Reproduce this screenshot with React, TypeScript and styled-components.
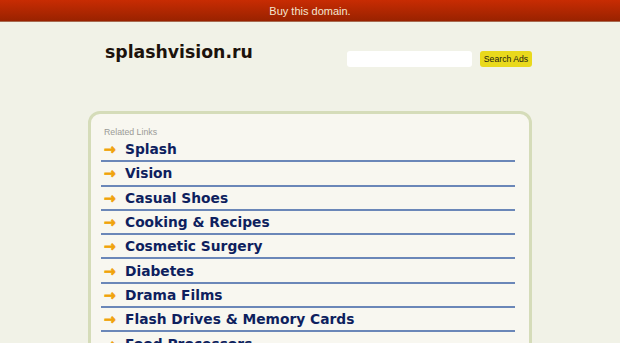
import styled, { createGlobalStyle } from "styled-components"

const GlobalStyle = createGlobalStyle`
    html, body {
        margin: 0;
        padding: 0;
        background-color: #f1f2e7;
        overflow: hidden;
    }
`

const TopBar = styled.div`
    height: 21px;
    background: linear-gradient(#c82c03, #992200);
    border-bottom: 1px solid #a86a50;
    display: flex;
    align-items: center;
    justify-content: center;
    font-family: "Liberation Sans", Arial, sans-serif;
    font-size: 11px;
    color: #f4e6d0;
`

const Page = styled.div`
    width: 444px;
    margin: 0 auto;
`

const Header = styled.div`
    padding: 18px 0 0 17px;
    height: 71px;
    display: flex;
    align-items: flex-start;
    justify-content: space-between;
`

const Title = styled.h1`
    margin: 0;
    font-family: "DejaVu Sans", Verdana, sans-serif;
    font-weight: bold;
    font-size: 17.3px;
    line-height: 24px;
    color: #1c120c;
`

const SearchForm = styled.form`
    display: flex;
    gap: 8px;
    padding-top: 11px;
`

const SearchInput = styled.input`
    width: 125px;
    height: 16px;
    box-sizing: border-box;
    border: none;
    border-radius: 3px;
    background: #ffffff;
`

const SearchButton = styled.button`
    height: 16px;
    width: 52px;
    padding: 0;
    border: none;
    border-radius: 3px;
    background: #e9d91c;
    font-family: "Liberation Sans", Arial, sans-serif;
    font-size: 8.7px;
    color: #222010;
`

const Panel = styled.div`
    border: 3px solid #d5dcb9;
    border-radius: 12px;
    background: #f8f7f0;
    padding: 13px 14px 0 10px;
    height: 300px;
    box-sizing: border-box;
`

const Caption = styled.div`
    font-family: "Liberation Sans", Arial, sans-serif;
    font-size: 8.75px;
    color: #9a9a96;
    padding-left: 3px;
    margin-bottom: 1px;
`

const LinkList = styled.ul`
    list-style: none;
    margin: 0;
    padding: 0;
`

const LinkRow = styled.li`
    height: 22.3px;
    border-bottom: 2px solid #6b87b8;
    display: flex;
    align-items: center;
    gap: 9px;
    padding-left: 3px;
`

const Arrow = styled.span`
    color: #f0a30a;
    font-family: "DejaVu Sans", sans-serif;
    font-weight: bold;
    font-size: 14px;
    width: 12px;
    line-height: 1;
    -webkit-text-stroke: 0.7px #f0a30a;
`

const LinkText = styled.a`
    font-family: "DejaVu Sans", Verdana, sans-serif;
    font-weight: bold;
    font-size: 13.8px;
    color: #0e1f5e;
    text-decoration: none;
`

const links = [
    "Splash",
    "Vision",
    "Casual Shoes",
    "Cooking & Recipes",
    "Cosmetic Surgery",
    "Diabetes",
    "Drama Films",
    "Flash Drives & Memory Cards",
    "Food Processors",
]

export default function App() {
    return (
        <>
            <GlobalStyle />
            <TopBar>Buy this domain.</TopBar>
            <Page>
                <Header>
                    <Title>splashvision.ru</Title>
                    <SearchForm onSubmit={(e) => e.preventDefault()}>
                        <SearchInput type="text" />
                        <SearchButton type="submit">Search Ads</SearchButton>
                    </SearchForm>
                </Header>
                <Panel>
                    <Caption>Related Links</Caption>
                    <LinkList>
                        {links.map((name) => (
                            <LinkRow key={name}>
                                <Arrow>→</Arrow>
                                <LinkText href="#">{name}</LinkText>
                            </LinkRow>
                        ))}
                    </LinkList>
                </Panel>
            </Page>
        </>
    )
}
